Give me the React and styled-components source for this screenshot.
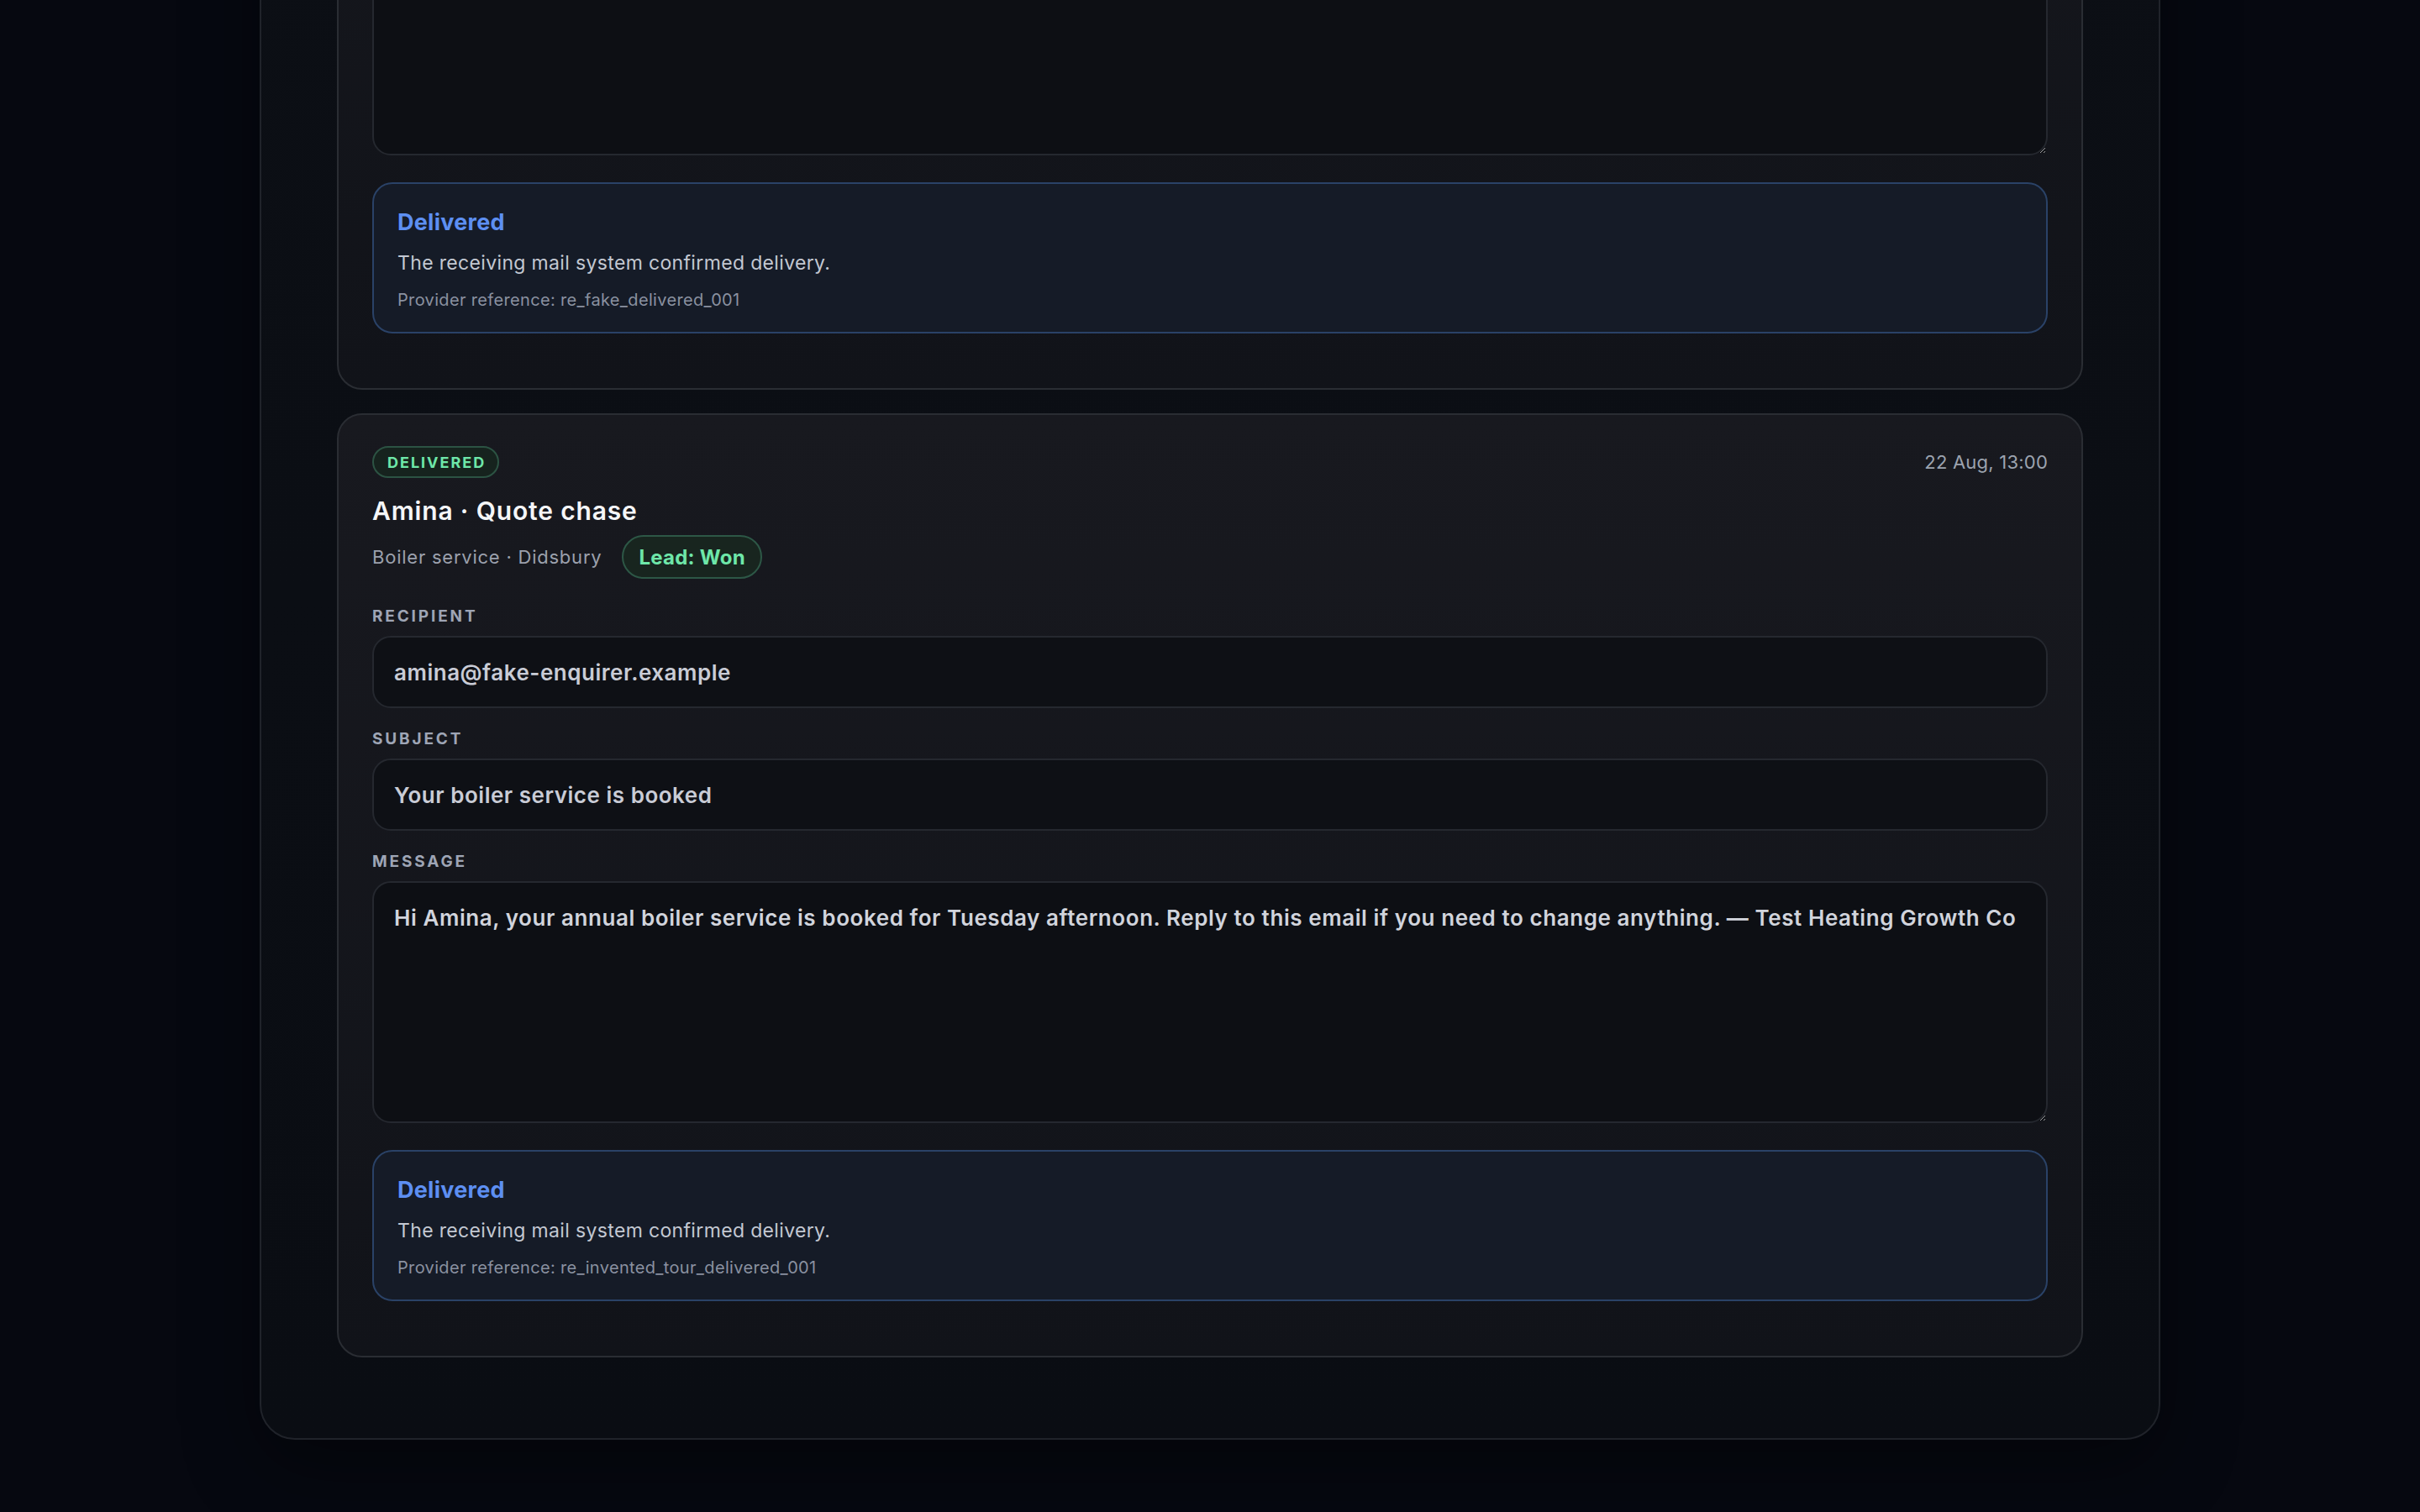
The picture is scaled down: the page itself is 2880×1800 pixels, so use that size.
import React, { useLayoutEffect } from "react";
import styled, { createGlobalStyle } from "styled-components";

const GlobalStyle = createGlobalStyle`
  html {
    color-scheme: dark;
    scrollbar-gutter: stable both-edges;
    background: #060810;
  }
  body {
    margin: 0;
    background: #060810;
    font-family: Inter, "Noto Sans", "Liberation Sans", sans-serif;
    color: #e5e7eb;
    -webkit-font-smoothing: antialiased;
  }
  ::-webkit-scrollbar {
    width: 18px;
    background: transparent;
  }
  ::-webkit-scrollbar-track {
    background: transparent;
  }
  ::-webkit-scrollbar-thumb {
    background: #85868a;
    background-clip: padding-box;
    border: 2px solid transparent;
    border-radius: 9px;
  }
`;

const Page = styled.main`
  padding: 86px 0;
`;

const Panel = styled.section`
  box-sizing: border-box;
  max-width: 2262px;
  margin: 0 auto;
  padding: 90px 90px 96px;
  border: 2px solid #20232a;
  border-radius: 42px;
  background: linear-gradient(180deg, #0e1117 0%, #0a0d13 100%);
  box-shadow: 0 30px 90px rgba(0, 0, 0, 0.4);
`;

const Header = styled.header`
  margin-bottom: 56px;
`;

const Eyebrow = styled.div`
  font-size: 19px;
  line-height: 23px;
  font-weight: 700;
  letter-spacing: 0.15em;
  text-transform: uppercase;
  color: #6ee7a9;
`;

const Heading = styled.h1`
  margin: 16px 0 0;
  font-size: 56px;
  line-height: 72px;
  font-weight: 700;
  color: #f5f6f8;
`;

const Intro = styled.p`
  margin: 18px 0 0;
  font-size: 26px;
  line-height: 39px;
  color: #9ca1ad;
`;

const Stats = styled.div`
  display: grid;
  grid-template-columns: repeat(3, 1fr);
  gap: 28px;
  margin-top: 48px;
`;

const Stat = styled.div`
  padding: 28px 32px;
  border: 2px solid #2a2d33;
  border-radius: 24px;
  background: #14161c;
`;

const StatValue = styled.div`
  margin-top: 10px;
  font-size: 48px;
  line-height: 58px;
  font-weight: 700;
  color: #f5f6f8;
`;

const List = styled.div`
  display: flex;
  flex-direction: column;
  gap: 28px;
`;

const Card = styled.article`
  display: flex;
  flex-direction: column;
  padding: 37px 40px 65px;
  border: 2px solid #2a2d33;
  border-radius: 30px;
  background: linear-gradient(180deg, #18191f 0%, #111319 100%);
`;

const CardTop = styled.div`
  display: flex;
  align-items: center;
  justify-content: space-between;
`;

const StatusBadge = styled.span`
  box-sizing: border-box;
  display: inline-flex;
  align-items: center;
  height: 38px;
  padding: 0 14px 0 16px;
  border: 2px solid #2c5343;
  border-radius: 999px;
  background: #16231e;
  color: #6ee7a9;
  font-size: 18px;
  font-weight: 700;
  letter-spacing: 0.11em;
`;

const Time = styled.span`
  font-size: 22px;
  letter-spacing: 0.01em;
  color: #9ca3af;
`;

const Title = styled.h2`
  margin: 20px 0 0;
  font-size: 30px;
  line-height: 39px;
  font-weight: 600;
  letter-spacing: 0.028em;
  color: #f5f6f8;
`;

const Meta = styled.div`
  display: flex;
  align-items: center;
  gap: 24px;
  height: 52px;
  margin-top: 9px;
  font-size: 22px;
  letter-spacing: 0.035em;
  color: #9ca1ad;
`;

const LeadPill = styled.span`
  box-sizing: border-box;
  display: inline-flex;
  align-items: center;
  height: 52px;
  padding: 0 18px;
  border: 2px solid #2d5746;
  border-radius: 999px;
  background: #18251f;
  color: #6ee7a9;
  font-size: 24px;
  font-weight: 700;
  letter-spacing: 0.01em;
`;

const Fields = styled.div`
  display: flex;
  flex-direction: column;
  gap: 25px;
  margin-top: 33px;
`;

const Field = styled.label`
  display: flex;
  flex-direction: column;
  gap: 12px;
`;

const FieldLabel = styled.span`
  font-size: 19px;
  line-height: 23px;
  font-weight: 700;
  letter-spacing: 0.15em;
  text-transform: uppercase;
  color: #9ea5b5;
`;

const TextInput = styled.input`
  box-sizing: border-box;
  height: 86px;
  padding: 0 24px;
  border: 2px solid #25282f;
  border-radius: 22px;
  background: #0e1015;
  color: #c9ccd6;
  font-family: inherit;
  font-size: 26px;
  font-weight: 600;
  letter-spacing: 0.02em;
  outline: none;
`;

const MessageBox = styled.textarea`
  box-sizing: border-box;
  height: 288px;
  padding: 22px 24px;
  border: 2px solid #25282f;
  border-radius: 22px;
  background: #0d0f14;
  color: #d1d4dc;
  font-family: inherit;
  font-size: 26px;
  line-height: 39px;
  font-weight: 600;
  letter-spacing: 0.022em;
  resize: vertical;
  overflow: hidden;
  outline: none;
`;

const Delivery = styled.div`
  margin-top: 32px;
  padding: 28px 28px 24px;
  border: 2px solid #2a4267;
  border-radius: 24px;
  background: #151b27;
`;

const DeliveryTitle = styled.div`
  font-size: 27px;
  line-height: 35px;
  font-weight: 700;
  letter-spacing: 0.01em;
  color: #5d8ff2;
`;

const DeliveryText = styled.p`
  margin: 14px 0 0;
  font-size: 23px;
  line-height: 34px;
  letter-spacing: 0.015em;
  color: #c3c8d2;
`;

const DeliveryRef = styled.p`
  margin: 13px 0 0;
  font-size: 20px;
  line-height: 28px;
  letter-spacing: 0.017em;
  color: #8a91a0;
`;

const messages = [
  {
    id: "m0",
    time: "21 Aug, 16:45",
    title: "Priya · Missed call",
    meta: "Radiator repair · Chorlton",
    lead: "Lead: Contacted",
    recipient: "priya@fake-enquirer.example",
    subject: "Sorry we missed your call",
    body: "Hi Priya, sorry we missed your call earlier. We can look at the radiator on Thursday morning. — Test Heating Growth Co",
    reference: "re_fake_delivered_000",
  },
  {
    id: "m1",
    time: "22 Aug, 10:20",
    title: "Tom · New enquiry",
    meta: "Boiler install · Chorlton",
    lead: "Lead: Quoted",
    recipient: "tom@fake-enquirer.example",
    subject: "Your boiler installation quote",
    body: "Hi Tom, thanks for getting in touch. Your quote for the new combi boiler is attached. — Test Heating Growth Co",
    reference: "re_fake_delivered_001",
  },
  {
    id: "m2",
    time: "22 Aug, 13:00",
    title: "Amina · Quote chase",
    meta: "Boiler service · Didsbury",
    lead: "Lead: Won",
    recipient: "amina@fake-enquirer.example",
    subject: "Your boiler service is booked",
    body: "Hi Amina, your annual boiler service is booked for Tuesday afternoon. Reply to this email if you need to change anything. — Test Heating Growth Co",
    reference: "re_invented_tour_delivered_001",
  },
];

function MessageCard({ message }) {
  return (
    <Card>
      <CardTop>
        <StatusBadge>DELIVERED</StatusBadge>
        <Time>{message.time}</Time>
      </CardTop>
      <Title>{message.title}</Title>
      <Meta>
        <span>{message.meta}</span>
        <LeadPill>{message.lead}</LeadPill>
      </Meta>
      <Fields>
        <Field>
          <FieldLabel>Recipient</FieldLabel>
          <TextInput readOnly value={message.recipient} />
        </Field>
        <Field>
          <FieldLabel>Subject</FieldLabel>
          <TextInput readOnly value={message.subject} />
        </Field>
        <Field>
          <FieldLabel>Message</FieldLabel>
          <MessageBox readOnly value={message.body} />
        </Field>
      </Fields>
      <Delivery>
        <DeliveryTitle>Delivered</DeliveryTitle>
        <DeliveryText>The receiving mail system confirmed delivery.</DeliveryText>
        <DeliveryRef>Provider reference: {message.reference}</DeliveryRef>
      </Delivery>
    </Card>
  );
}

export default function App() {
  // open the outbox at its newest message
  useLayoutEffect(() => {
    const toBottom = () =>
      window.scrollTo(0, document.documentElement.scrollHeight);
    toBottom();
    requestAnimationFrame(toBottom);
  }, []);

  return (
    <>
      <GlobalStyle />
      <Page>
        <Panel>
          <Header>
            <Eyebrow>Outbox</Eyebrow>
            <Heading>Sent emails</Heading>
            <Intro>Every follow-up sent to an enquirer, with its delivery status.</Intro>
            <Stats>
              <Stat>
                <FieldLabel>Sent</FieldLabel>
                <StatValue>3</StatValue>
              </Stat>
              <Stat>
                <FieldLabel>Delivered</FieldLabel>
                <StatValue>3</StatValue>
              </Stat>
              <Stat>
                <FieldLabel>Bounced</FieldLabel>
                <StatValue>0</StatValue>
              </Stat>
            </Stats>
          </Header>
          <List>
            {messages.map((m) => (
              <MessageCard key={m.id} message={m} />
            ))}
          </List>
        </Panel>
      </Page>
    </>
  );
}
